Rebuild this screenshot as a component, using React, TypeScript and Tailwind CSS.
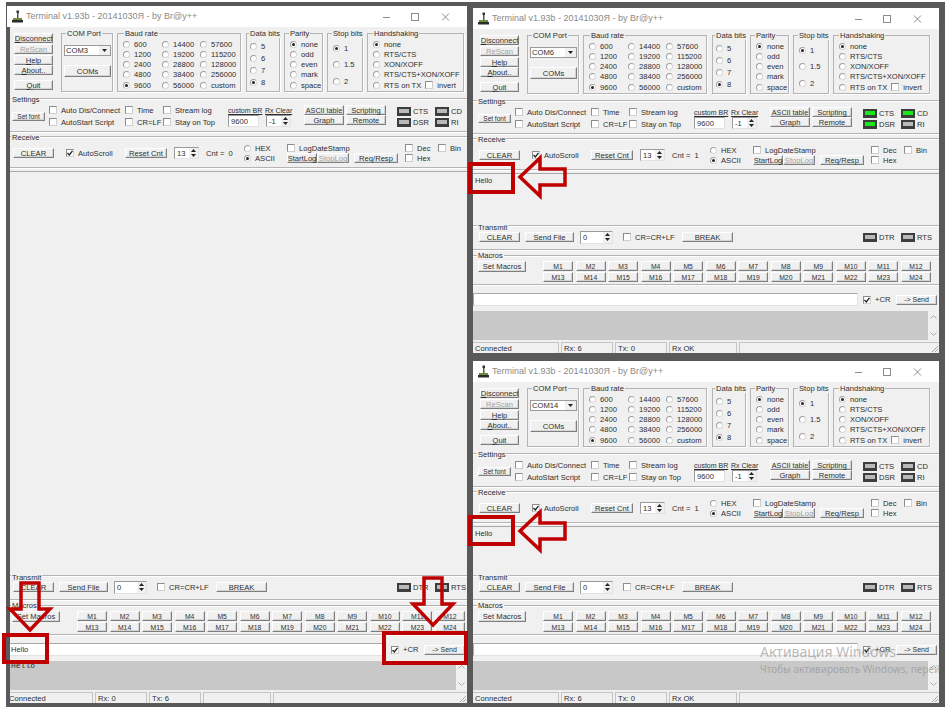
import type { ReactNode } from "react";

const FONT = "font-['Liberation_Sans',Arial,sans-serif] text-[7.6px] leading-[9px] text-[#2e2e2e]";

type WinProps = {
  className: string;
  port: string;
  cnt: string;
  rx: string;
  tx: string;
  status?: string;
  leds?: boolean;
  inputText?: string;
  outputText?: string;
  echoText?: string;
  cropped?: boolean;
};

function Btn({ className, children, disabled }: { className: string; children: ReactNode; disabled?: boolean }) {
  return (
    <div
      className={
        "flex shrink-0 items-center justify-center whitespace-nowrap border border-t-white border-l-white border-r-[#7f7f7f] border-b-[#7f7f7f] bg-[#f0f0f0] shadow-[inset_-1px_-1px_0_#d4d4d4] " +
        (disabled ? "text-[#a3a3a3] " : "") +
        className
      }
    >
      {children}
    </div>
  );
}

function Radio({ label, on, className = "" }: { label?: string; on?: boolean; className?: string }) {
  return (
    <div className={"flex items-center gap-[4px] whitespace-nowrap " + className}>
      <span className="flex h-[7px] w-[7px] shrink-0 items-center justify-center rounded-full border border-[#a0a0a0] border-r-[#d8d8d8] border-b-[#d8d8d8] bg-white">
        {on && <span className="h-[3px] w-[3px] rounded-full bg-[#222]" />}
      </span>
      {label}
    </div>
  );
}

function Check({ label, on, className = "" }: { label?: string; on?: boolean; className?: string }) {
  return (
    <div className={"flex items-center gap-[4px] whitespace-nowrap " + className}>
      <span className="flex h-[8px] w-[8px] shrink-0 items-center justify-center border border-[#8c8c8c] border-r-[#cfcfcf] border-b-[#cfcfcf] bg-white">
        {on && (
          <svg width="6" height="6" viewBox="0 0 6 6">
            <path d="M0.5 3 L2.3 5 L5.5 0.8" fill="none" stroke="#222" strokeWidth="1.3" />
          </svg>
        )}
      </span>
      {label}
    </div>
  );
}

function Spin({ value, className }: { value: string; className: string }) {
  return (
    <div className={"flex shrink-0 items-center justify-between border border-[#9a9a9a] border-r-[#e2e2e2] border-b-[#e2e2e2] bg-white pl-[2px] " + className}>
      {value}
      <span className="flex h-full w-[9px] flex-col items-center justify-center gap-[2px] bg-[#f0f0f0]">
        <svg width="5" height="3" viewBox="0 0 5 3">
          <path d="M2.5 0 L5 3 L0 3 Z" fill="#222" />
        </svg>
        <svg width="5" height="3" viewBox="0 0 5 3">
          <path d="M0 0 L5 0 L2.5 3 Z" fill="#222" />
        </svg>
      </span>
    </div>
  );
}

function Led({ green, label, className = "" }: { green?: boolean; label: string; className?: string }) {
  return (
    <div className={"flex h-[10px] items-center gap-[2px] " + className}>
      <span className="flex h-[9px] w-[14px] items-center justify-center bg-[#3d3d3d]">
        <span className={"h-[4px] w-[10px] " + (green ? "bg-[#18e818]" : "bg-[#b9b9b9]")} />
      </span>
      {label}
    </div>
  );
}

function Group({ title, titleClass, className, children }: { title: string; titleClass: string; className: string; children: ReactNode }) {
  return (
    <div className={"shrink-0 border border-[#b4b4b4] shadow-[1px_1px_0_white] " + className}>
      <div className={"-mt-[5px] w-fit whitespace-nowrap bg-[#f0f0f0] px-[1px] " + titleClass}>{title}</div>
      {children}
    </div>
  );
}

function Panel({ title, className, titleClass = "-mt-[5px]", children }: { title: string; className: string; titleClass?: string; children: ReactNode }) {
  return (
    <section className={"shrink-0 border-y border-[#b4b4b4] shadow-[0_1px_0_white,inset_0_1px_0_white] " + className}>
      <div className={"ml-[4px] w-fit bg-[#f0f0f0] px-[1px] " + titleClass}>{title}</div>
      {children}
    </section>
  );
}

function TopRow({ port }: { port: string }) {
  return (
    <div className="flex h-[71px] shrink-0 pl-[7px]">
      <div className="mt-[6px] flex w-[39px] flex-col">
        <Btn className="h-[10px] w-[39px]"><span><u>D</u>isconnect</span></Btn>
        <Btn disabled className="mt-[1px] h-[10px] w-[39px]">ReScan</Btn>
        <Btn className="mt-[1px] h-[10px] w-[39px]"><span><u>H</u>elp</span></Btn>
        <Btn className="h-[10px] w-[39px]"><span><u>A</u>bout..</span></Btn>
        <Btn className="mt-[5px] h-[10px] w-[39px]"><span><u>Q</u>uit</span></Btn>
      </div>
      <Group title="COM Port" titleClass="ml-[4px]" className="mt-[6px] ml-[8px] h-[59px] w-[52px]">
        <div className="mt-[7px] ml-[2px] flex h-[11px] w-[47px] items-center justify-between border border-[#9a9a9a] bg-white pl-[1px]">
          {port}
          <span className="flex h-full w-[11px] items-center justify-center bg-[#f0f0f0]">
            <svg width="5" height="3" viewBox="0 0 5 3">
              <path d="M0 0 L5 0 L2.5 3 Z" fill="#222" />
            </svg>
          </span>
        </div>
        <Btn className="mt-[9px] ml-[2px] h-[12px] w-[47px]">COMs</Btn>
      </Group>
      <Group title="Baud rate" titleClass="ml-[6px]" className="mt-[6px] ml-[4px] h-[59px] w-[124px]">
        <div className="mt-[1px] ml-[5px] grid grid-flow-col grid-cols-[39px_38px_38px] grid-rows-5 auto-rows-[10.25px]">
          {["600", "1200", "2400", "4800", "9600", "14400", "19200", "28800", "38400", "56000", "57600", "115200", "128000", "256000", "custom"].map((b) => (
            <Radio key={b} label={b} on={b === "9600"} className="h-[10.25px]" />
          ))}
        </div>
      </Group>
      <Group title="Data bits" titleClass="ml-[2px]" className="mt-[6px] ml-[5px] h-[59px] w-[34px]">
        <div className="mt-[3px] ml-[3px] flex flex-col gap-[2px]">
          {["5", "6", "7", "8"].map((b) => (
            <Radio key={b} label={b} on={b === "8"} className="h-[10px]" />
          ))}
        </div>
      </Group>
      <Group title="Parity" titleClass="ml-[4px]" className="mt-[6px] ml-[4px] h-[59px] w-[39px]">
        <div className="mt-[1px] ml-[5px] flex flex-col">
          {["none", "odd", "even", "mark", "space"].map((b) => (
            <Radio key={b} label={b} on={b === "none"} className="h-[10.25px]" />
          ))}
        </div>
      </Group>
      <Group title="Stop bits" titleClass="ml-[4px]" className="mt-[6px] ml-[4px] h-[59px] w-[36px]">
        <div className="mt-[5px] ml-[5px] flex flex-col gap-[6px]">
          {["1", "1.5", "2"].map((b) => (
            <Radio key={b} label={b} on={b === "1"} className="h-[10.5px]" />
          ))}
        </div>
      </Group>
      <Group title="Handshaking" titleClass="ml-[5px]" className="mt-[6px] ml-[4px] h-[59px] w-[97px]">
        <div className="mt-[1px] ml-[5px] flex flex-col">
          {["none", "RTS/CTS", "XON/XOFF", "RTS/CTS+XON/XOFF"].map((b) => (
            <Radio key={b} label={b} on={b === "none"} className="h-[10.25px]" />
          ))}
          <div className="flex h-[10.25px] items-center gap-[4px]">
            <Radio label="RTS on TX" />
            <Check label="invert" />
          </div>
        </div>
      </Group>
    </div>
  );
}

function SettingsPanel({ leds }: { leds?: boolean }) {
  return (
    <Panel title="Settings" titleClass="-mt-[4px]" className="h-[34px]">
      <div className="flex h-[24px] pl-[5px]">
        <Btn className="mt-[8px] h-[9px] w-[33px] text-[6.5px]">Set font</Btn>
        <div className="ml-[4px] flex w-[76px] flex-col">
          <Check label="Auto Dis/Connect" className="h-[12px]" />
          <Check label="AutoStart Script" className="h-[12px]" />
        </div>
        <div className="flex w-[38px] flex-col">
          <Check label="Time" className="h-[12px]" />
          <Check label="CR=LF" className="h-[12px]" />
        </div>
        <div className="flex w-[65px] flex-col">
          <Check label="Stream log" className="h-[12px]" />
          <Check label="Stay on Top" className="h-[12px]" />
        </div>
        <div className="flex w-[37px] flex-col whitespace-nowrap">
          <span className="pt-[2px] text-[7px] underline">custom BR</span>
          <div className="flex h-[12px] w-[31px] items-center border border-[#9a9a9a] border-r-[#e2e2e2] border-b-[#e2e2e2] bg-white pl-[2px]">9600</div>
        </div>
        <div className="flex w-[39px] flex-col whitespace-nowrap">
          <span className="pt-[2px] text-[7px] underline">Rx Clear</span>
          <Spin value="-1" className="ml-[1px] h-[12px] w-[25px]" />
        </div>
        <div className="flex w-[42px] flex-col pt-[1px]">
          <Btn className="h-[10px] w-[40px] text-[7.2px]">ASCII table</Btn>
          <Btn className="h-[10px] w-[40px]">Graph</Btn>
        </div>
        <div className="flex w-[51px] flex-col pt-[1px]">
          <Btn className="h-[10px] w-[40px]">Scripting</Btn>
          <Btn className="h-[10px] w-[40px]">Remote</Btn>
        </div>
        <div className="flex w-[38px] flex-col gap-[1px] pt-[2px]">
          <Led green={leds} label="CTS" className="w-[36px]" />
          <Led green={leds} label="DSR" className="w-[36px]" />
        </div>
        <div className="flex flex-col gap-[1px] pt-[2px]">
          <Led green={leds} label="CD" className="w-[30px]" />
          <Led label="RI" className="w-[30px]" />
        </div>
      </div>
    </Panel>
  );
}

function ReceivePanel({ cnt }: { cnt: string }) {
  return (
    <Panel title="Receive" titleClass="-mt-[4px]" className="mt-[4px] h-[32px]">
      <div className="flex h-[22px] items-center pl-[6px]">
        <Btn className="h-[10px] w-[41px]">CLEAR</Btn>
        <Check label="AutoScroll" on className="ml-[12px] w-[59px]" />
        <Btn className="h-[10px] w-[42px]">Reset Cnt</Btn>
        <Spin value="13" className="ml-[7px] h-[12px] w-[25px]" />
        <span className="ml-[7px] w-[38px] whitespace-nowrap">Cnt =&nbsp; {cnt}</span>
        <div className="flex w-[43px] flex-col">
          <Radio label="HEX" className="h-[10px]" />
          <Radio label="ASCII" on className="h-[10px]" />
        </div>
        <div className="flex w-[118px] flex-col">
          <Check label="LogDateStamp" className="h-[10px]" />
          <div className="flex">
            <Btn className="h-[10px] w-[30px]">StartLog</Btn>
            <Btn disabled className="h-[10px] w-[32px]">StopLog</Btn>
            <Btn className="ml-[5px] h-[10px] w-[44px]">Req/Resp</Btn>
          </div>
        </div>
        <div className="flex w-[33px] flex-col">
          <Check label="Dec" className="h-[10px]" />
          <Check label="Hex" className="h-[10px]" />
        </div>
        <Check label="Bin" className="-mt-[10px]" />
      </div>
    </Panel>
  );
}

function TransmitPanel() {
  return (
    <Panel title="Transmit" titleClass="-mt-[3px]" className="mt-[5px] h-[25px]">
      <div className="-mt-[3px] flex h-[16px] items-center pl-[6px]">
        <Btn className="h-[10px] w-[41px]">CLEAR</Btn>
        <Btn className="ml-[5px] h-[10px] w-[49px]">Send File</Btn>
        <Spin value="0" className="ml-[6px] h-[13px] w-[33px]" />
        <Check label="CR=CR+LF" className="ml-[10px] w-[59px]" />
        <Btn className="h-[10px] w-[51px]">BREAK</Btn>
        <Led label="DTR" className="ml-[130px] w-[38px]" />
        <Led label="RTS" />
      </div>
    </Panel>
  );
}

function MacrosPanel() {
  const macros = Array.from({ length: 24 }, (_, i) => "M" + (i + 1));
  return (
    <Panel title="Macros" className="mt-[5px] h-[30px]">
      <div className="flex pl-[5px]">
        <Btn className="mt-[1px] h-[11px] w-[48px]">Set Macros</Btn>
        <div className="mt-[1px] ml-[17px] grid w-[388px] grid-cols-12 gap-x-[2.5px] gap-y-[1px]">
          {macros.map((m) => (
            <Btn key={m} className="h-[10px] text-[6.8px]">{m}</Btn>
          ))}
        </div>
      </div>
    </Panel>
  );
}

function Terminal({ className, port, cnt, rx, tx, status = "", leds, inputText = "", outputText = "", echoText, cropped }: WinProps) {
  return (
    <div className={"relative flex shrink-0 flex-col overflow-hidden bg-[#f0f0f0] " + FONT + " " + className}>
      <div className="flex h-[21px] shrink-0 items-center bg-white pl-[5px] text-[#8a8a8a]">
        <svg width="11" height="13" viewBox="0 0 11 13" className="shrink-0">
          <rect x="4.5" y="0.5" width="2.5" height="2.5" fill="#333" />
          <rect x="5" y="3" width="1.5" height="5" fill="#555" />
          <rect x="1" y="8" width="9" height="2" fill="#6c8a3a" />
          <rect x="0" y="10" width="11" height="2.5" fill="#2b2b2b" />
        </svg>
        <span className="ml-[3px] text-[9px]">Terminal v1.93b - 20141030Я - by Br@y++</span>
        <svg width="75" height="10" viewBox="0 0 75 10" className="mr-[9px] ml-auto shrink-0" stroke="#8c8c8c" fill="none">
          <path d="M0 5.5 H7" />
          <rect x="28.5" y="1.5" width="7" height="7" />
          <path d="M59 1.5 L66 8.5 M66 1.5 L59 8.5" />
        </svg>
      </div>
      <TopRow port={port} />
      <SettingsPanel leds={leds} />
      <ReceivePanel cnt={cnt} />
      <div className="mt-[3px] min-h-0 flex-1 border-t border-[#a8a8a8] pt-[2px] pl-[2px]">{outputText}</div>
      <TransmitPanel />
      <MacrosPanel />
      <div className="mt-[8px] flex h-[13px] shrink-0 items-center">
        <div className="flex h-[13px] flex-1 items-center border border-[#a8a8a8] border-r-[#e2e2e2] border-b-[#e2e2e2] bg-white pl-[3px]">{inputText}</div>
        <Check on className="mr-[4px] ml-[5px] gap-0" />
        <span className="w-[21px]">+CR</span>
        <Btn className="mr-[2px] h-[10px] w-[41px] text-[7px]">-&gt; Send</Btn>
      </div>
      <div className="mt-[5px] flex h-[29px] shrink-0">
        <div className="flex-1 overflow-hidden bg-[#c8c8c8] pl-[4px]">
          {echoText && <div className="font-['Liberation_Mono',monospace] text-[8px]">{echoText}</div>}
        </div>
        <div className="flex w-[11px] flex-col items-center justify-between py-[4px]">
          <svg width="7" height="4" viewBox="0 0 7 4">
            <path d="M0.5 3.5 L3.5 0.5 L6.5 3.5" fill="none" stroke="#a8a8a8" />
          </svg>
          <svg width="7" height="4" viewBox="0 0 7 4">
            <path d="M0.5 0.5 L3.5 3.5 L6.5 0.5" fill="none" stroke="#a8a8a8" />
          </svg>
        </div>
      </div>
      <div className="mt-[2px] flex h-[11px] shrink-0 gap-[2px] leading-[12px]">
        <div className="w-[86px] border-t border-r border-[#c4c4c4] pl-[2px]">Connected</div>
        <div className="w-[52px] border-t border-r border-l border-[#c4c4c4] pl-[2px]">Rx: {rx}</div>
        <div className="w-[52px] border-t border-r border-l border-[#c4c4c4] pl-[2px]">Tx: {tx}</div>
        <div className="w-[68px] border-t border-r border-l border-[#c4c4c4] pl-[2px]">{status}</div>
        <div className="flex flex-1 justify-end border-t border-l border-[#c4c4c4]">
          <svg width="9" height="9" viewBox="0 0 9 9" className="mt-[1px]">
            <path d="M8 2 L2 8 M8 5 L5 8" stroke="#a8a8a8" />
          </svg>
        </div>
      </div>
      {cropped && <div className="absolute top-[21px] bottom-0 left-0 w-[3px] bg-[#595959]" />}
    </div>
  );
}

function ArrowDown({ className }: { className: string }) {
  return (
    <svg width="48" height="53" viewBox="0 0 48 53" className={"absolute " + className} fill="none" stroke="#c00000" strokeWidth="3.5">
      <path d="M15 2 H33 V28 H44 L24 49 L4 28 H15 Z" />
    </svg>
  );
}

function ArrowLeft({ className }: { className: string }) {
  return (
    <svg width="52" height="46" viewBox="0 0 52 46" className={"absolute " + className} fill="none" stroke="#c00000" strokeWidth="3.5">
      <path d="M4 23 L24 4 V15 H49 V31 H24 V42 Z" />
    </svg>
  );
}

export default function App() {
  return (
    <div className="relative h-[710px] w-[947px] overflow-hidden bg-white pt-[2px] pl-[6px]">
      <div className="flex h-[705px] w-[939px] bg-[#595959]">
        <Terminal
          cropped
          className="mt-[4px] ml-[1px] h-[697px] w-[460px]"
          port="COM3"
          cnt="0"
          rx="0"
          tx="6"
          inputText="Hello"
          echoText="Hello"
        />
        <div className="mt-[6px] ml-[6px] flex flex-col gap-[8px]">
          <Terminal className="h-[345px] w-[466px]" port="COM6" cnt="1" rx="6" tx="0" status="Rx OK" leds outputText="Hello" />
          <Terminal className="h-[342px] w-[466px]" port="COM14" cnt="1" rx="6" tx="0" status="Rx OK" outputText="Hello" />
        </div>
      </div>

      {/* красные пометки поверх окон */}
      <div className="absolute top-[633px] left-[2px] h-[31px] w-[47px] border-4 border-[#c00000]" />
      <ArrowDown className="top-[581px] left-[6px]" />
      <div className="absolute top-[631px] left-[382px] h-[34px] w-[86px] border-4 border-[#c00000]" />
      <ArrowDown className="top-[576px] left-[409px]" />
      <div className="absolute top-[162px] left-[468px] h-[32px] w-[47px] border-4 border-[#c00000]" />
      <ArrowLeft className="top-[154px] left-[516px]" />
      <div className="absolute top-[515px] left-[468px] h-[31px] w-[47px] border-4 border-[#c00000]" />
      <ArrowLeft className="top-[508px] left-[516px]" />

      <div className="pointer-events-none absolute top-[642px] left-[760px] w-[180px] overflow-hidden font-['Noto_Sans',sans-serif] whitespace-nowrap text-[#8a8a8a]/60">
        <div className="text-[14px] leading-[20px]">Активация Windows</div>
        <div className="text-[10px] leading-[14px]">Чтобы активировать Windows, перейд</div>
      </div>
    </div>
  );
}
